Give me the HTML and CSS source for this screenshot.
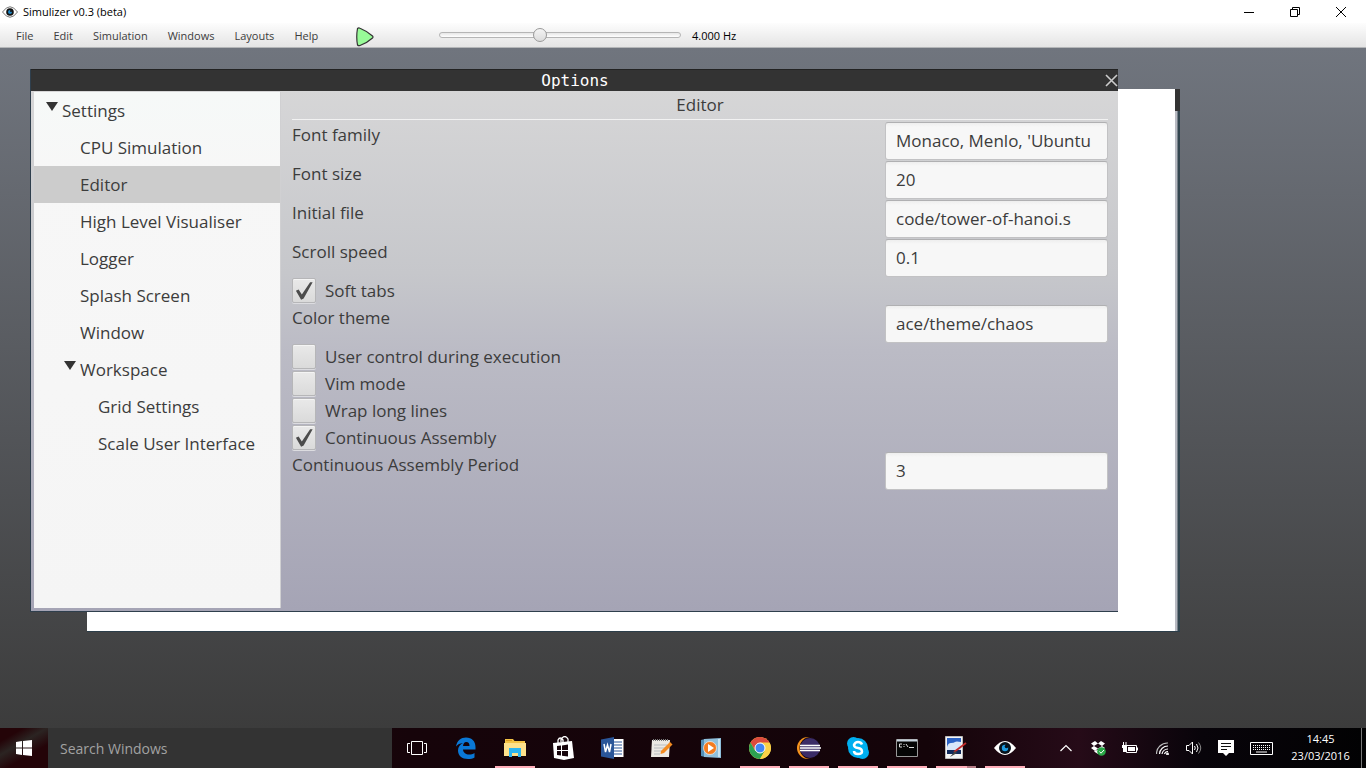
FILE: index.html
```html
<!DOCTYPE html>
<html lang="en">
<head>
<meta charset="utf-8">
<title>Simulizer v0.3 (beta)</title>
<link rel="stylesheet" href="styles.css">
</head>
<body>
<header class="titlebar">
  <svg class="app-icon" width="16" height="12" viewBox="0 0 16 12"><path d="M.5 6Q8-4.500 15.500 6Q8 16.500 .5 6z" fill="#fff" stroke="#777"/><circle cx="8" cy="6" r="3.800" fill="#111"/><circle cx="8" cy="6" r="2" fill="#1e88c8"/><circle cx="9" cy="5" r="1" fill="#111"/></svg>
  <h1 class="app-title">Simulizer v0.3 (beta)</h1>
  <div class="window-controls">
    <button aria-label="Minimize"><svg width="12" height="12" viewBox="0 0 12 12"><path d="M1 6.500h10" stroke="#000"/></svg></button>
    <button aria-label="Restore"><svg width="12" height="12" viewBox="0 0 12 12" fill="none" stroke="#000"><path d="M1.500 3.500h7v7h-7zM3.500 3.500v-2h7v7h-2"/></svg></button>
    <button aria-label="Close"><svg width="12" height="12" viewBox="0 0 12 12"><path d="M1 1l10 10M11 1L1 11" stroke="#000"/></svg></button>
  </div>
</header>
<div class="toolbar">
  <nav class="menu">
    <button>File</button><button>Edit</button><button>Simulation</button><button>Windows</button><button>Layouts</button><button>Help</button>
  </nav>
  <button class="play" aria-label="Run"><svg width="20" height="20" viewBox="0 0 20 20"><path d="M2.500 1.500Q3.500 .5 5 1.200Q12 4 17.500 9Q18.500 10 17.500 11Q12 16 5 18.500Q3.500 19 2.500 18Q1 10 2.500 1.500z" fill="#98fb98" stroke="#333" stroke-width="1.200"/></svg></button>
  <input class="speed" id="speed" type="range" min="0" max="100" value="41" aria-label="Clock speed">
  <label class="speed-label" for="speed">4.000 Hz</label>
</div>
<main class="desktop">
  <div class="back-window"><div class="back-edge"></div></div>
  <section class="options">
    <div class="options-bar">
      <h2>Options</h2>
      <button class="options-close" aria-label="Close options"><svg width="13" height="13" viewBox="0 0 13 13"><path d="M1 1l11 11M12 1L1 12" stroke="#ccc" stroke-width="1.600"/></svg></button>
    </div>
    <div class="options-body">
      <ul class="tree">
        <li class="level-0"><span class="arrow"></span>Settings</li>
        <li class="level-1">CPU Simulation</li>
        <li class="level-1 selected">Editor</li>
        <li class="level-1">High Level Visualiser</li>
        <li class="level-1">Logger</li>
        <li class="level-1">Splash Screen</li>
        <li class="level-1">Window</li>
        <li class="level-1"><span class="arrow"></span>Workspace</li>
        <li class="level-2">Grid Settings</li>
        <li class="level-2">Scale User Interface</li>
      </ul>
      <form class="panel">
        <h3>Editor</h3>
        <div class="field"><label for="family">Font family</label><input id="family" type="text" value="Monaco, Menlo, 'Ubuntu"></div>
        <div class="field"><label for="size">Font size</label><input id="size" type="text" value="20"></div>
        <div class="field"><label for="file">Initial file</label><input id="file" type="text" value="code/tower-of-hanoi.s"></div>
        <div class="field"><label for="scroll">Scroll speed</label><input id="scroll" type="text" value="0.1"></div>
        <label class="check"><input type="checkbox" checked>Soft tabs</label>
        <div class="field"><label for="theme">Color theme</label><input id="theme" type="text" value="ace/theme/chaos"></div>
        <label class="check"><input type="checkbox">User control during execution</label>
        <label class="check"><input type="checkbox">Vim mode</label>
        <label class="check"><input type="checkbox">Wrap long lines</label>
        <label class="check"><input type="checkbox" checked>Continuous Assembly</label>
        <div class="field"><label for="period">Continuous Assembly Period</label><input id="period" type="text" value="3"></div>
      </form>
    </div>
  </section>
</main>
<footer class="taskbar">
  <button class="start" aria-label="Start"><svg width="16" height="16" viewBox="0 0 16 16" fill="#fff"><path d="M0 2l6-1v6.500H0zM7 1l9-1v7.500H7zM0 8.500h6V15l-6-1zM7 8.500h9V16l-9-1z"/></svg></button>
  <input class="search" type="text" placeholder="Search Windows" aria-label="Search Windows">
  <div class="apps">
    <button aria-label="Task view"><svg width="20" height="14" viewBox="0 0 20 14" fill="none" stroke="#fff"><path d="M4.500 .5h11v13h-11zM3 2.500H.5v9H3M17 2.500h2.500v9H17"/></svg></button>
    <button aria-label="Edge"><svg width="22" height="22" viewBox="0 0 22 22"><path d="M1 9.500C2 3.500 6 .5 11 .5c6 0 9.500 4 9.500 9.500v2.500H8c.3 3.500 3 5 6 5 2 0 4-.5 5.500-1.500v4.500C18 21.500 15.500 22 13 22 7 22 3 18.500 3 13.500c0-3.500 2-6 5-7.500C5 6.300 2.500 7.500 1 9.500zM8 9h6.500C14.500 6.500 13.500 5 11.300 5S8.300 6.700 8 9z" fill="#0a78d6"/></svg></button>
    <button class="running" aria-label="File Explorer"><svg width="22" height="20" viewBox="0 0 22 20"><path d="M1 1h8l1.500 2H21v15H1z" fill="#f3c344"/><path d="M2 2h6v1H2z" fill="#d99a20"/><path d="M0 5h22v13H0z" fill="#fde18b"/><path d="M5 10h12v9h-3v-4H8v4H5z" fill="#2cb5f0"/></svg></button>
    <button aria-label="Store"><svg width="22" height="24" viewBox="0 0 22 24"><path d="M5 7V4q2-4 5 0v3M8 6V3q4-5 7 0v3" fill="none" stroke="#fff" stroke-width="1.300"/><path d="M0 7l19-2 2 17-10 2L1 22z" fill="#fff"/><path d="M4 10l4-.5v4.500H4zM9 9.400l6-.8V14H9zM4 15h4v4.500L4 19zM9 15h6v5.500l-6-.8z" fill="#16040a"/></svg></button>
    <button aria-label="Word"><svg width="23" height="22" viewBox="0 0 23 22"><path d="M11 2h11.500v18H11z" fill="#fff"/><path d="M13 5h8M13 8h8M13 11h8M13 14h8M13 17h8" stroke="#2a5699" stroke-width="1.200"/><path d="M0 2.500L13 0v22L0 19.500z" fill="#2a5699"/><path d="M3 7l1.500 8L6.500 8l2 7L10 7" stroke="#fff" stroke-width="1.500" fill="none"/></svg></button>
    <button aria-label="Notepad"><svg width="22" height="20" viewBox="0 0 22 20"><path d="M1 2h18l-1 17H0z" fill="#ece9e4"/><path d="M2 2h16" stroke="#777" stroke-width="2" stroke-dasharray="1 1"/><path d="M3 7h13M3 10h11M3 13h9M3 16h6" stroke="#b9bcc0"/><path d="M10 13L19 4l2.500 2.500-8.500 8.500-3.500 1z" fill="#f38b21"/></svg></button>
    <button aria-label="Media Player"><svg width="20" height="20" viewBox="0 0 20 20"><path d="M0 2l4-1v18l-4-1z" fill="#5390b8"/><path d="M3 1l17-1v20L3 19z" fill="#8fc0dc"/><path d="M17 1h2v18h-2z" fill="#c9e4f2"/><circle cx="9" cy="10" r="6.500" fill="#f47c20" stroke="#fff" stroke-width=".6"/><path d="M7 6l6 4-6 4z" fill="#fff"/></svg></button>
    <button class="running" aria-label="Chrome"><svg width="22" height="22" viewBox="0 0 22 22"><circle cx="11" cy="11" r="11" fill="#fbd147"/><path d="M1.500 5.500A11 11 0 0 1 20.500 5.500H11L6.200 13.700z" fill="#dc4a3d"/><path d="M1.500 5.500A11 11 0 0 0 11 22l4.800-8.200H6.200z" fill="#2da152"/><path d="M11 22l4.800-8.200A6 6 0 0 0 16 6H20.700A11 11 0 0 1 11 22z" fill="#fbd147"/><circle cx="11" cy="11" r="5" fill="#4285f4" stroke="#fff"/></svg></button>
    <button class="running" aria-label="Eclipse"><svg width="24" height="22" viewBox="0 0 24 22"><circle cx="11" cy="11" r="11" fill="#f7941e"/><circle cx="13.500" cy="11" r="11" fill="#14040c"/><circle cx="13" cy="11" r="10" fill="#3b2c67"/><path d="M3 8.500h20M3 11h21M3 13.500h20" stroke="#fff" stroke-width="1.300"/></svg></button>
    <button class="running" aria-label="Skype"><svg width="22" height="22" viewBox="0 0 22 22" fill="#00aff0"><circle cx="6.500" cy="6.500" r="6.500"/><circle cx="15.500" cy="15.500" r="6.500"/><circle cx="11" cy="11" r="10"/><path d="M15 7.500Q14 5 11 5T7 8q0 2.500 4 3t4 3.500Q15 17 11 17t-4-3" fill="none" stroke="#fff" stroke-width="2.500"/></svg></button>
    <button class="running" aria-label="Command Prompt"><svg width="22" height="18" viewBox="0 0 22 18"><path d="M.5 .5h21v17H.5z" fill="#050505" stroke="#999"/><path d="M1 1.500h20" stroke="#c8d4de" stroke-width="2"/><path d="M6 5H3.500v3H6M8 5v1M8 7v1M10 5l2 3M13 8.500h5" stroke="#ddd" fill="none"/></svg></button>
    <button class="running grouped" aria-label="Paint"><svg width="22" height="24" viewBox="0 0 22 24"><path d="M.5 .5h17v22H.5z" fill="#f5f5f5" stroke="#bbb"/><path d="M2 2h14v14H2z" fill="#2b62c4"/><path d="M2 11q1-4 4-4t4-1 6 0v8H2z" fill="#d7e7fa"/><path d="M2 14h14v4H2z" fill="#102a5c"/><path d="M21 7L9 16" stroke="#c22b2b" stroke-width="1.800"/><path d="M10 15l-5 6 7-4z" fill="#444"/></svg></button>
    <button class="running" aria-label="Simulizer"><svg width="22" height="16" viewBox="0 0 22 16"><path d="M0 8Q11-6 22 8Q11 22 0 8z" fill="#fff"/><circle cx="11" cy="8" r="6" fill="#08131c"/><circle cx="11" cy="8" r="3.200" fill="#1e9be0"/><circle cx="12.500" cy="6.500" r="1.800" fill="#08131c"/></svg></button>
  </div>
  <div class="tray">
    <button aria-label="Hidden icons"><svg width="12" height="8" viewBox="0 0 12 8"><path d="M.5 7L6 1.500 11.500 7" fill="none" stroke="#fff" stroke-width="1.200"/></svg></button>
    <button aria-label="Dropbox"><svg width="15" height="15" viewBox="0 0 15 15" fill="#fff"><path d="M0 2.500L4 0l3 2.500L3 5zM14 2.500L10 0 7 2.500 11 5zM0 7l3-2 4 2.500L4 10zM14 7l-3-2-4 2.500L10 10zM3 10.500l4-2 4 2-4 2.500z"/><circle cx="10.500" cy="10.500" r="4.300" fill="#28a745"/><path d="M8.500 10.500l1.500 1.700 3-3.200" fill="none" stroke="#fff"/></svg></button>
    <button aria-label="Battery"><svg width="16" height="12" viewBox="0 0 16 12"><path d="M4.500 3.500h10v7h-10z" fill="none" stroke="#fff"/><path d="M6 5h7v4H6zM15 5.500h1v3h-1zM0 3h5v3H4v4H1V6H0zM1 0h1v3H1zM3.500 0h1v3h-1z" fill="#fff"/></svg></button>
    <button aria-label="Wi-Fi"><svg width="13" height="13" viewBox="0 0 13 13" fill="none" stroke="#fff" stroke-width="1.200"><path d="M.5 12A11 11 0 0 1 12 1" stroke="#bbb"/><path d="M3.500 12A8.500 8.500 0 0 1 12 4M6 12a6 6 0 0 1 6-5M8.500 12A3.500 3.500 0 0 1 12 9.500"/><circle cx="11.500" cy="12" r=".8"/></svg></button>
    <button aria-label="Volume"><svg width="16" height="14" viewBox="0 0 16 14" fill="none" stroke="#fff"><path d="M.5 4.500H3L6.500 1v12L3 9.500H.5zM8.500 5q1.500 2 0 4M10.500 3q3 4 0 8"/><path d="M12.500 1.500q4.500 5.500 0 11" stroke="#888"/></svg></button>
    <button aria-label="Notifications"><svg width="16" height="16" viewBox="0 0 16 16"><path d="M0 0h16v13h-5l-3 3-3-3H0z" fill="#fff"/><path d="M3 3.500h10M3 6.500h10M3 9.500h6" stroke="#111"/></svg></button>
    <button aria-label="Keyboard"><svg width="23" height="13" viewBox="0 0 23 13"><path d="M.5 .5h22v12H.5z" fill="none" stroke="#fff"/><path d="M3 3.500h18M3 5.500h18M3 7.500h18" stroke="#fff" stroke-dasharray="1 1"/><path d="M6 10h11" stroke="#fff"/></svg></button>
    <div class="clock"><time>14:45</time><time>23/03/2016</time></div>
    <div class="show-desktop"></div>
  </div>
</footer>
</body>
</html>
```

FILE: styles.css
```css
* { box-sizing: border-box; }
body {
  margin: 0;
  height: 100vh;
  display: flex;
  flex-direction: column;
  overflow: hidden;
  background: #fff;
  color: #3c3c3c;
  font-family: "Open Sans", "Noto Sans", sans-serif;
  font-size: 12px;
}
button, input { font: inherit; color: inherit; }
button { border: 0; padding: 0; background: none; }
h1, h2, h3, ul { margin: 0; padding: 0; font-weight: normal; }
svg { display: block; }

.titlebar { display: flex; align-items: center; height: 23px; padding: 0 2px; }
.app-icon { margin-right: 5px; }
.app-title { flex: 1; font-size: 11px; color: #000; }
.window-controls { display: flex; }
.window-controls button { width: 46px; height: 22px; display: grid; place-items: center; }

.toolbar {
  display: flex;
  align-items: center;
  height: 25px;
  padding-left: 7px;
  font-size: 11px;
  background: linear-gradient(#fdfdfd, #e4e4e4);
  border-bottom: 1px solid #b4b6b8;
}
.menu { display: flex; gap: 2px; width: 348px; }
.menu button { padding: 0 9px; }
.play { width: 22px; padding-top: 3px; }
.speed { appearance: none; width: 242px; height: 16px; margin: 0 0 0 62px; background: none; }
.speed::-webkit-slider-runnable-track {
  height: 6px;
  border: 1px solid #b5b5b5;
  border-radius: 3px;
  background: linear-gradient(#e6e6e6, #fff);
}
.speed::-webkit-slider-thumb {
  appearance: none;
  width: 14px;
  height: 14px;
  margin-top: -5px;
  border: 1px solid #999;
  border-radius: 50%;
  background: linear-gradient(#f4f4f4, #dcdcdc);
}
.speed-label { margin-left: 11px; color: #000; }

.desktop { flex: 1; position: relative; background: linear-gradient(#70757e, #3c3c3c); }
.back-window {
  position: absolute;
  inset: 41px 186px 96px 87px;
  background: #fff;
  border-bottom: 1px solid #2c3e4a;
}
.back-edge {
  position: absolute;
  top: 0;
  bottom: 0;
  right: 0;
  width: 5px;
  background: linear-gradient(#333 22px, transparent 22px), linear-gradient(90deg, #b8bac2 2px, #33454f 3px);
}
.options {
  position: absolute;
  inset: 21px 248px 116px 30px;
  display: flex;
  flex-direction: column;
  border: solid #2f3f4d;
  border-width: 0 0 1px 1px;
}
.options-bar {
  display: flex;
  align-items: center;
  height: 22px;
  border-top: 1px solid #222;
  background: #333;
}
.options-bar h2 {
  flex: 1;
  padding-left: 14px;
  text-align: center;
  font: 16px/20px "DejaVu Sans Mono", monospace;
  color: #fff;
}
.options-body {
  flex: 1;
  display: flex;
  padding: 1px 0 3px 3px;
  background: linear-gradient(#d6d6d7, #c6c7cb 35%, #bbbbc5 50%, #a5a4b5);
  font-size: 17px;
}
.tree {
  width: 247px;
  list-style: none;
  background: linear-gradient(#f6f9f8, #f7f7f7 15%, #f5f5f5);
  border-right: 1px solid #d0d0d2;
}
.tree li { height: 37px; line-height: 38px; display: flex; }
.tree .selected { background: #ccc; }
.level-0 { padding-left: 28px; }
.level-1 { padding-left: 46px; }
.level-2 { padding-left: 64px; }
.arrow {
  width: 12px;
  height: 9px;
  margin: 10px 4px 0 -16px;
  background: #333;
  clip-path: polygon(0 0, 100% 0, 50% 100%);
}
.panel { flex: 1; padding: 0 10px 0 11px; }
.panel h3 {
  height: 28px;
  margin-bottom: 2px;
  font-size: 17px;
  line-height: 26px;
  text-align: center;
  border-bottom: 1px solid #f2f2f2;
}
.field { display: flex; justify-content: space-between; height: 39px; line-height: 26px; }
.field input {
  width: 223px;
  height: 38px;
  padding: 0 10px 1px;
  border: 1px solid #c2c2c4;
  border-top-color: #b0b0b2;
  border-radius: 3px;
  background: linear-gradient(#eee, #f7f7f7 4px);
}
.check { display: flex; height: 27px; line-height: 26px; }
.check input {
  appearance: none;
  width: 24px;
  height: 25px;
  margin: 0 9px 0 0;
  border: 1px solid #b6b6b8;
  border-radius: 2px;
  background: linear-gradient(#e9e9e9, #dadada);
  box-shadow: inset 0 1px #f4f4f4, 0 1px #dcdce0;
}
.check input:checked::before {
  content: "";
  display: block;
  width: 18px;
  height: 18px;
  margin: 3px 2px;
  background: #4c4c4c;
  clip-path: polygon(5% 48%, 20% 42%, 38% 70%, 84% 2%, 98% 2%, 48% 92%, 34% 98%);
}

.taskbar {
  display: flex;
  height: 40px;
  background: linear-gradient(90deg, #26060a, #16040a 30%, #140409 68%, #260b18 79%, #08040a 88%, #020203);
}
.taskbar button { display: grid; place-items: center; }
.start { width: 48px; background: linear-gradient(150deg, #240408 20%, #2b2422 40%, #240408 65%); }
.search { width: 344px; padding: 0 12px; border: 0; background: #333; font-size: 14px; }
.search::placeholder { color: #a2a2a2; opacity: 1; }
.apps { display: flex; }
.apps button { width: 49px; }
.apps .running {
  background: linear-gradient(#ffaeb9, #ffaeb9) center bottom / 40px 2px no-repeat;
}
.apps .grouped {
  background-image: linear-gradient(90deg, #ffaeb9 31px, #b57c86 31px);
}
.tray { display: flex; flex: 1; justify-content: flex-end; }
.tray button { width: 32px; }
.tray button:nth-child(7) { width: 38px; }
.clock {
  display: flex;
  flex-direction: column;
  width: 81px;
  padding-top: 2px;
  font-size: 11px;
  line-height: 17px;
  text-align: center;
  color: #fff;
}
.show-desktop { width: 5px; border-left: 1px solid #777; }
```
